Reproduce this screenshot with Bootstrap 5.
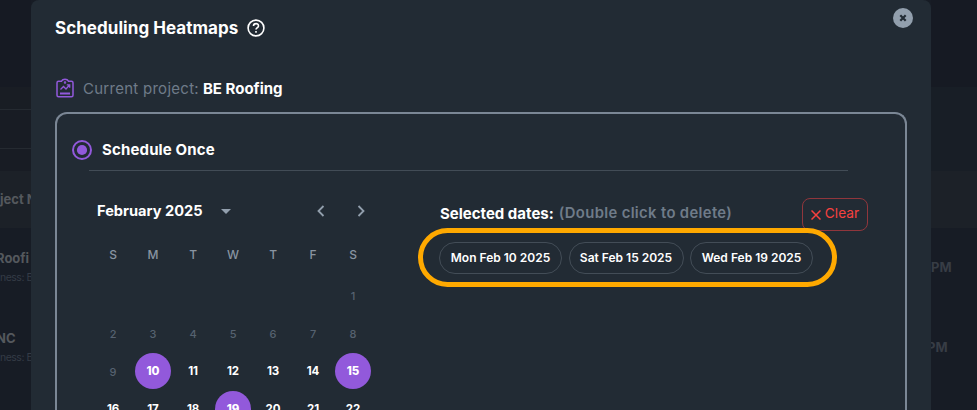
<!DOCTYPE html>
<html lang="en">
<head>
<meta charset="utf-8">
<meta name="viewport" content="width=device-width, initial-scale=1">
<title>Scheduling Heatmaps</title>
<link href="https://cdn.jsdelivr.net/npm/bootstrap@5.3.0/dist/css/bootstrap.min.css" rel="stylesheet">
<style>
body{font-family:Inter,"Liberation Sans",sans-serif;background:#171c25;color:#fff;height:410px;line-height:1}
.page{height:410px;background:#171c25}
.side{height:410px;white-space:nowrap;font-weight:700;font-size:13px;color:#54585d}
.side-l{width:31px}
.side-r{width:46px;color:#373d45}
.side>div{flex:none}
.side small{display:block;font-weight:400;font-size:10.5px;letter-spacing:-.5px;color:#343b45}
.s-top{height:87px;background:#161a23}
.s-a{height:23px;border-bottom:1px solid #252a31;background:#191d24}
.s-b{height:39px;border-bottom:1px solid #252a31;background:#181c24}
.s-c{height:22px;background:#181c24}
.s-mid{height:84px;background:#181e26}
.s-row{height:57px;background:#1c2128;padding-top:22px}
.s-item{height:80px;padding-top:24px}
.side-r .s-item{padding-top:33px}
.tuck{margin-left:-4px}
.panel{width:900px;height:410px;background:#222b34;border-radius:8px 8px 0 0;padding:16px 24px 0}
.close-dot{width:20px;height:20px;top:8px;right:18px;background:#929fad}
.title{font-size:17px;height:24px;gap:9px}
.title .txt{letter-spacing:.05px}
.project{font-size:15px;height:22px;margin-top:37px;color:#6f7b89}
.project .lbl{margin:0 4px 0 8px;letter-spacing:.27px}
.box{border:2px solid #7b8795;border-bottom:0;border-radius:12px 12px 0 0;width:852px;height:300px;margin-top:13px;padding:26px 37px 0 15px}
.once{font-size:15px;height:20px;gap:10px}
.once .txt{letter-spacing:.15px;padding-bottom:2px}
.rule{height:1px;background:#424c56;margin:10px 20px 0 17px}
.cal{width:280px;margin:20px 0 0 21px}
.cal-head{height:40px;font-size:14.6px;padding:0 7px 0 4px;margin-bottom:3px}
.caret{margin-left:18px}
.next{margin-left:32px}
.days{display:grid;grid-template-columns:repeat(7,40px);grid-template-rows:42px;grid-auto-rows:38px;font-size:11.5px}
.days span{display:flex;align-items:center;justify-content:center;margin:1px 2px;padding-top:2px;font-weight:700;letter-spacing:-.1px}
.days .wk{color:#8994a1;font-weight:500;font-size:12px;padding-top:0}
.days .off{color:#566270;font-weight:500;font-size:11px}
.days .on{background:#9259db;border-radius:50%;font-weight:800}
.picked{width:429px;margin-top:27px}
.sel{font-size:15px;height:33px;padding-left:1px}
.sel .txt{padding-bottom:2px}
.hint{color:#6f7b89;font-weight:600;font-size:14.8px;letter-spacing:.36px;margin-left:5px}
.clear{width:66px;height:33px;border:1px solid #90363c;border-radius:8px;color:#f6413f;font-size:13.7px}
.dates{gap:6.5px;margin-top:11px}
.date{width:123px;height:32px;border:1px solid #434d57;border-radius:16px;font-size:12px;font-weight:600}
.date-sm{width:115px}
.ring{left:418px;top:228px;width:419px;height:59px;border:5px solid #ffa900;border-radius:30px}
.txt{white-space:nowrap}
</style>
<script src="https://cdn.jsdelivr.net/npm/bootstrap@5.3.0/dist/js/bootstrap.bundle.min.js"></script>
</head>
<body class="overflow-hidden">
<div class="page d-flex position-relative overflow-hidden">
  <aside class="side side-l d-flex flex-column overflow-hidden flex-shrink-0">
    <div class="s-top"></div><div class="s-a"></div><div class="s-b"></div><div class="s-c"></div>
    <div class="s-row">ject N</div>
    <div class="s-item"><div class="tuck">Roofi</div><small class="mt-2">ness: B</small></div>
    <div class="s-item"><div class="tuck">NC</div><small class="mt-2">ness: E</small></div>
  </aside>
  <main class="panel position-relative flex-shrink-0">
    <button class="close-dot btn p-0 border-0 rounded-circle position-absolute d-flex align-items-center justify-content-center" aria-label="Close">
      <svg width="8" height="8" viewBox="0 0 8 8" stroke="#222b34" stroke-width="2.2"><path d="M1.3 1.3l5.4 5.4M6.7 1.3L1.3 6.7"/></svg>
    </button>
    <header class="title d-flex align-items-center fw-bold">
      <span class="txt">Scheduling Heatmaps</span>
      <svg width="18" height="18" viewBox="0 0 18 18" fill="none" stroke="#fff" stroke-width="1.6"><circle cx="9" cy="9" r="7.9"/><path d="M6.5 7.1C6.5 3.8 11.5 3.9 11.5 6.9C11.5 8.5 9 8.6 9 10.6M9 12v1.7"/></svg>
    </header>
    <div class="project d-flex align-items-center">
      <svg width="20" height="20" viewBox="0 0 20 20" fill="none" stroke="#9259db" stroke-width="1.5"><path d="M6.5 3.2h-3Q2 3.2 2 4.7v12.500q0 1.500 1.500 1.500h13q1.500 0 1.500-1.500V4.700q0-1.500-1.500-1.500h-3Q12.500 1.300 10 1.300T6.500 3.200z"/><path d="M5 15.500h10" stroke-width="2"/><path d="M5.500 11.500L8.500 8.500l2.500 2.500 3.500-4M11.800 6.800h2.900v2.900" stroke-width="1.3"/><circle cx="10" cy="4.500" r=".5"/></svg>
      <span class="txt lbl">Current project:</span><b class="txt text-white fw-bold">BE Roofing</b>
    </div>
    <section class="box">
      <div class="once d-flex align-items-center fw-bold">
        <svg width="20" height="20" viewBox="0 0 20 20"><circle cx="10" cy="10" r="9" fill="none" stroke="#9259db" stroke-width="2"/><circle cx="10" cy="10" r="5.1" fill="#9259db"/></svg>
        <span class="txt">Schedule Once</span>
      </div>
      <div class="rule"></div>
      <div class="d-flex justify-content-between">
        <div class="cal flex-shrink-0">
          <div class="cal-head d-flex align-items-center fw-bold">
            <span class="txt">February 2025</span>
            <svg class="caret" width="10" height="5" fill="#929fad"><path d="M0 0h10L5 5z"/></svg>
            <svg class="ms-auto" width="9" height="12" fill="none" stroke="#929fad" stroke-width="1.8"><path d="M7.5 1L2.500 6l5 5"/></svg>
            <svg class="next" width="9" height="12" fill="none" stroke="#929fad" stroke-width="1.8"><path d="M1.500 1l5 5-5 5"/></svg>
          </div>
          <div class="days">
            <span class="wk">S</span><span class="wk">M</span><span class="wk">T</span><span class="wk">W</span><span class="wk">T</span><span class="wk">F</span><span class="wk">S</span>
            <span></span><span></span><span></span><span></span><span></span><span></span><span class="off">1</span>
            <span class="off">2</span><span class="off">3</span><span class="off">4</span><span class="off">5</span><span class="off">6</span><span class="off">7</span><span class="off">8</span>
            <span class="off">9</span><span class="on">10</span><span>11</span><span>12</span><span>13</span><span>14</span><span class="on">15</span>
            <span>16</span><span>17</span><span>18</span><span class="on">19</span><span>20</span><span>21</span><span>22</span>
          </div>
        </div>
        <div class="picked flex-shrink-0">
          <div class="sel d-flex align-items-center fw-bold">
            <span class="txt">Selected dates:</span><span class="txt hint">(Double click to delete)</span>
            <button class="clear btn p-0 ms-auto d-flex align-items-center justify-content-center"><svg class="me-1" width="10" height="10" fill="none" stroke="#f6413f" stroke-width="1.5"><path d="M.5.5l9 9M9.5.5l-9 9"/></svg><span class="txt">Clear</span></button>
          </div>
          <div class="dates d-flex">
            <div class="date d-flex align-items-center justify-content-center">Mon Feb 10 2025</div>
            <div class="date date-sm d-flex align-items-center justify-content-center">Sat Feb 15 2025</div>
            <div class="date d-flex align-items-center justify-content-center">Wed Feb 19 2025</div>
          </div>
        </div>
      </div>
    </section>
  </main>
  <aside class="side side-r d-flex flex-column overflow-hidden flex-shrink-0">
    <div class="s-top"></div><div class="s-mid"></div><div class="s-row"></div>
    <div class="s-item">PM</div><div class="s-item"><div class="tuck">PM</div></div>
  </aside>
  <div class="ring position-absolute"></div>
</div>
</body>
</html>
